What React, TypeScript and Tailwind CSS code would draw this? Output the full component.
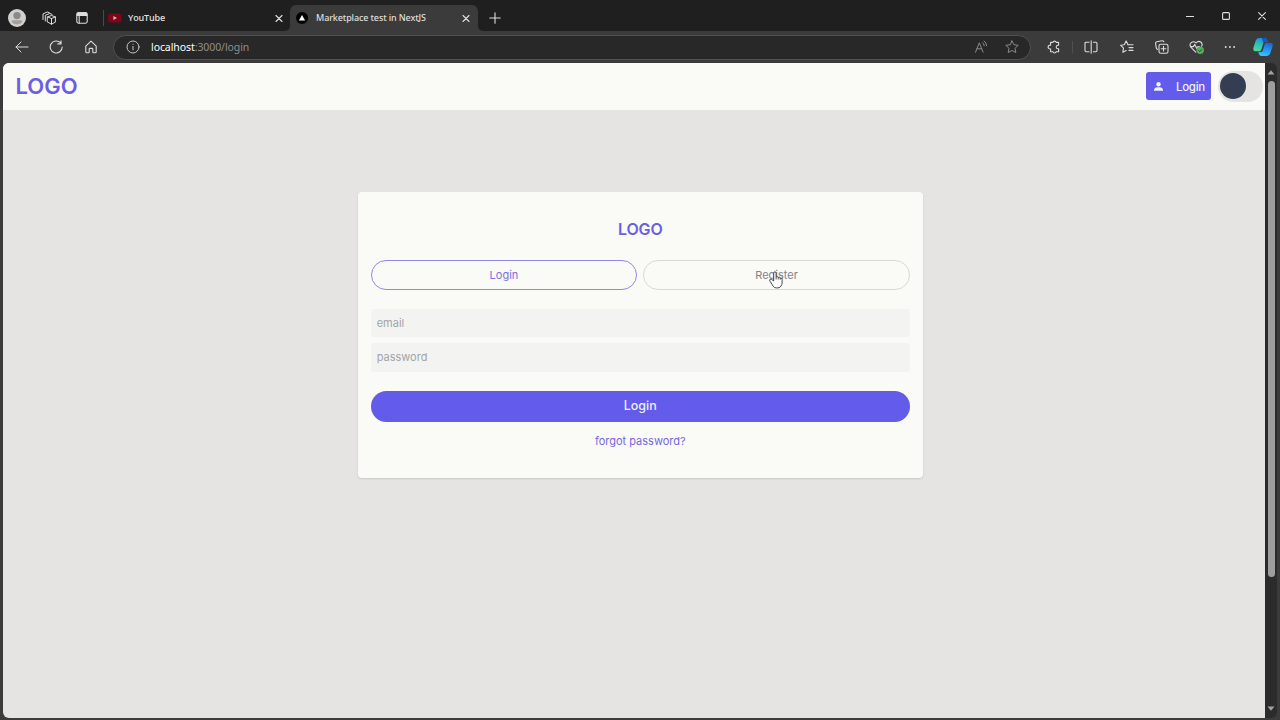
import type { ReactNode } from "react";

type IconProps = { className?: string; w?: number; h?: number; sw?: number; children: ReactNode };

function Icon({ className = "", w = 14, h = 14, sw = 1, children }: IconProps) {
  return (
    <svg
      className={`shrink-0 ${className}`}
      width={w}
      height={h}
      viewBox={`0 0 ${w} ${h}`}
      fill="none"
      stroke="currentColor"
      strokeWidth={sw}
      strokeLinecap="round"
      strokeLinejoin="round"
    >
      {children}
    </svg>
  );
}

function Slot({ className, children }: { className: string; children: ReactNode }) {
  return <div className={`flex h-full shrink-0 items-center justify-center ${className}`}>{children}</div>;
}

function CloseIcon({ className = "" }: { className?: string }) {
  return (
    <Icon w={8} h={8} sw={1.1} className={className}>
      <path d="M1 1.500l6 6M7 1.500L1 7.500" />
    </Icon>
  );
}

function TabStrip() {
  return (
    <div className="flex h-[31px] shrink-0 items-start bg-[#1f1f1f] text-[#dedede]">
      <Slot className="w-[34px] pt-[5px]">
        <svg width="18" height="18" viewBox="0 0 18 18" className="shrink-0">
          <circle cx="9" cy="9" r="9" fill="#d2d0ce" />
          <circle cx="9" cy="6.6" r="3.7" fill="#8c8987" />
          <path d="M3.8 12.1q0-.9.9-.9h8.6q.9 0 .9.900c0 2.200-2.400 3.300-5.200 3.300s-5.200-1.100-5.200-3.300z" fill="#a3a09e" />
        </svg>
      </Slot>
      <Slot className="w-[30px] pt-[5px]">
        <Icon w={14} h={14} sw={1}>
          <path d="M5.600 5.900l3.900-1.400 3.900 1.400v5.200l-3.900 2.100-3.900-2.100zM5.600 5.900l3.900 1.600 3.900-1.600M9.500 7.500v5.700" />
          <path d="M3.300 10V4.300L7.700 2.500l2.300.8M1 8.600V2.900L5.200 1l2.300.8" />
        </Icon>
      </Slot>
      <Slot className="w-[36px] pt-[5px]">
        <Icon w={12} h={12} sw={1.1}>
          <rect x="0.8" y="0.8" width="10.4" height="10.4" rx="1.6" />
          <path d="M1.2 1.6q.2-.8 1.200-.8h7.200q1 0 1.200.8v1.800H1.200z" fill="currentColor" />
          <path d="M3.200 4v7" />
        </Icon>
      </Slot>
      <div className="mt-[10px] ml-[3px] h-4 w-px bg-[#4a4a4a]" />
      <div className="flex h-full w-[186px] items-center pt-[5px] pl-1">
        <svg width="14" height="10" viewBox="0 0 14 10" className="shrink-0">
          <rect x="0" y="0.5" width="13.4" height="9" rx="2.5" fill="#7d0718" />
          <path d="M5.400 3l3.600 2-3.600 2z" fill="#d9b4b8" />
        </svg>
        <span className="ml-[6px] font-['Open_Sans','Noto_Sans',sans-serif] text-[9px] leading-3 font-semibold tracking-[-0.15px]">YouTube</span>
        <CloseIcon className="mr-[7.500px] ml-auto" />
      </div>
      <div className="relative mt-[5px] flex h-[26px] w-[188px] items-center rounded-t-[6px] bg-[#3b3b3b] pl-[6px]">
        <svg className="absolute bottom-0 -left-[5px]" width="5" height="5" viewBox="0 0 5 5">
          <path d="M5 0v5H0A5 5 0 0 0 5 0z" fill="#3b3b3b" />
        </svg>
        <svg className="absolute -right-[5px] bottom-0" width="5" height="5" viewBox="0 0 5 5">
          <path d="M0 0v5h5A5 5 0 0 1 0 0z" fill="#3b3b3b" />
        </svg>
        <svg width="12" height="12" viewBox="0 0 12 12" className="shrink-0">
          <circle cx="6" cy="6" r="6" fill="#000" />
          <path d="M6 3l3.100 5.400H2.900z" fill="#fff" />
        </svg>
        <span className="ml-[8px] font-['Noto_Sans','Open_Sans',sans-serif] text-[9px] leading-3 font-medium tracking-[-0.12px] whitespace-nowrap">
          Marketplace test in NextJS
        </span>
        <CloseIcon className="mr-[8px] ml-auto" />
      </div>
      <Slot className="w-[34px] pt-[5px]">
        <Icon w={12} h={12} sw={1.1}>
          <path d="M6 .8v10.400M.8 6h10.400" />
        </Icon>
      </Slot>
      <div className="ml-auto flex h-full pt-px">
        <Slot className="w-9">
          <Icon w={8} h={8} sw={1.1}>
            <path d="M.4 4.500h7.200" />
          </Icon>
        </Slot>
        <Slot className="w-9">
          <Icon w={8} h={8} sw={1.1}>
            <rect x="0.6" y="0.6" width="6.8" height="6.8" rx="1" />
          </Icon>
        </Slot>
        <Slot className="w-9">
          <Icon w={8} h={8} sw={1.1}>
            <path d="M.6.6l6.800 6.800M7.400.6L.6 7.400" />
          </Icon>
        </Slot>
      </div>
    </div>
  );
}

function Toolbar() {
  return (
    <div className="flex h-8 shrink-0 items-center bg-[#3b3b3b] text-[#dcdcdc]">
      <Slot className="ml-[5px] w-[34px]">
        <Icon w={14} h={12}>
          <path d="M13 6H1M6 1L1 6l5 5" />
        </Icon>
      </Slot>
      <Slot className="w-[34px]">
        <Icon sw={1.1}>
          <path d="M11.600 2.900A6 6 0 1 0 13.200 7M12 .7v3.200H8.800" />
        </Icon>
      </Slot>
      <Slot className="w-9">
        <Icon w={12} h={14} sw={1.1}>
          <path d="M.8 6.200L6 1.200l5.200 5v5.600q0 1-1 1H8.400q-.6 0-.6-.6V9q0-.6-.6-.6H4.800q-.6 0-.6.6v3.200q0 .6-.6.6H1.800q-1 0-1-1z" />
        </Icon>
      </Slot>
      <div className="ml-[4px] flex h-[25px] w-[918px] shrink-0 items-center rounded-full border border-[#505050] bg-[#282828] pl-[12px]">
        <Icon className="text-[#c4c4c4]">
          <circle cx="7" cy="7" r="6" />
          <path d="M7 6.400v3.400M7 4.200v.1" />
        </Icon>
        <span className="ml-[11px] font-['Noto_Sans','Open_Sans',sans-serif] text-[10.5px] leading-4 tracking-[-0.08px] text-[#8e8e8e]">
          <span className="text-white">localhost</span>:3000/login
        </span>
        <Icon w={14} h={14} className="ml-auto text-[#8a8a8a]">
          <path d="M1.500 12.200L5.300 2.800l3.800 9.400M2.900 8.800h4.800M8.700 2.800q1.400 1 1.500 3M10.100 1q2.400 1.600 2.600 4.800" />
        </Icon>
        <Icon w={14} h={14} className="mr-[11px] ml-[17px] text-[#8a8a8a]">
          <path d="M7 .9l1.900 3.800 4.200.6-3 3 .7 4.200L7 10.500l-3.800 2 .7-4.200-3-3 4.200-.6z" />
        </Icon>
      </div>
      <Slot className="ml-[5px] w-9">
        <Icon w={14} h={14} sw={1.1}>
          <path d="M3.600 2.400h2.300a1.700 1.700 0 0 1 3.300 0h2.400v2.800h-.6a1.800 1.800 0 0 0 0 3.600h.6v2.900H9.200a1.700 1.700 0 0 1-3.300 0H3.600V8.900a1.900 1.900 0 1 1 0-3.600z" />
        </Icon>
      </Slot>
      <div className="h-3 w-px bg-[#505050]" />
      <Slot className="w-9">
        <Icon w={14} h={14} sw={1.1}>
          <path d="M5 2.200H2.200q-1.200 0-1.200 1.200v7.200q0 1.200 1.200 1.200H5M9.400 2.200h2.400q1.200 0 1.200 1.200v7.200q0 1.200-1.200 1.200H9.400M7.200 .8v12.400" />
        </Icon>
      </Slot>
      <Slot className="w-[35px]">
        <Icon w={14} h={14} sw={1.1}>
          <path d="M7.600 4.800H13M9 7.600h4M9 10.400h4M8.200 4.800L6.100.9 4.300 4.700.7 5.300l2.800 2.800-.7 4.200 3.400-1.800" />
        </Icon>
      </Slot>
      <Slot className="w-[35px]">
        <Icon w={14} h={14} sw={1.1}>
          <rect x="4" y="4.200" width="9" height="9" rx="1.8" />
          <path d="M8.500 6.400v4.600M6.200 8.700h4.600M2.500 9.400q-1-.3-1.200-1.300L.6 3.400q-.2-1.400 1.100-1.700l5.400-1q1.300-.1 1.800 1.100" />
        </Icon>
      </Slot>
      <Slot className="w-[34px]">
        <Icon w={15} h={14} sw={1.1}>
          <path d="M6.800 12.200L2 7.400C-.8 4.200 3.800-.6 7 3c3.200-3.600 7.400 0 5.600 3.200M2 6.600h2.400l1.400-2.200 2 4 1.200-1.800h1.400" />
          <circle cx="11.200" cy="10.300" r="3.700" fill="#4fb357" stroke="none" />
          <path d="M9.700 10.400l1.100 1.100 2-2" stroke="#1f3d22" strokeWidth="0.900" />
        </Icon>
      </Slot>
      <Slot className="w-[34px]">
        <Icon w={12} h={4}>
          <path d="M1.700 2h.01M5.900 2h.01M10.100 2h.01" strokeWidth="1.900" />
        </Icon>
      </Slot>
      <Slot className="w-[31px]">
        <svg width="20" height="18" viewBox="0 0 20 18" className="shrink-0">
          <defs>
            <linearGradient id="copilotLeft" x1="0.6" y1="0" x2="0.3" y2="1">
              <stop offset="0" stopColor="#1b8fd8" />
              <stop offset="0.55" stopColor="#30c5b4" />
              <stop offset="1" stopColor="#55d895" />
            </linearGradient>
            <linearGradient id="copilotRight" x1="0.6" y1="0" x2="0.4" y2="1">
              <stop offset="0" stopColor="#1f63d6" />
              <stop offset="0.6" stopColor="#2a9df4" />
              <stop offset="1" stopColor="#35c8f5" />
            </linearGradient>
          </defs>
          <path d="M6 0h5.600q1.900 0 2.500 1.900l.5 2H12q-1.300 0-1.700 1.300L8.300 11.800Q7.800 13.200 6.300 13.200H3Q-.4 13.200.5 9.500L2.700 2.700Q3.500 0 6 0z" fill="url(#copilotLeft)" />
          <path d="M14 18H8.400q-1.900 0-2.500-1.900l-.5-2H8q1.300 0 1.700-1.300l2-6.600q.5-1.400 2-1.400H17q3.400 0 2.500 3.700l-2.200 6.800Q16.500 18 14 18z" fill="url(#copilotRight)" />
          <path d="M8.800 0h2.800q1.900 0 2.500 1.900l.5 2H12q-1.300 0-1.700 1.300z" fill="#1559c4" />
        </svg>
      </Slot>
    </div>
  );
}

function SiteHeader() {
  return (
    <header className="flex h-[47px] shrink-0 items-center justify-between bg-[#fafaf7] pl-[12.500px]">
      <span className="-mt-px text-[22px] leading-7 font-semibold text-[#6a5fdf]">LOGO</span>
      <div className="-mt-px flex items-center gap-[7px] pr-[2px]">
        <button className="flex h-7 w-[65px] items-center rounded-[3px] bg-[#635be9] pl-[7.500px] text-[#f1f0fb]">
          <svg width="9" height="9" viewBox="0 0 9 9" fill="currentColor">
            <circle cx="4.5" cy="2.300" r="2.200" />
            <path d="M0 8.700V7.800Q.2 5.400 3 5.200h3Q8.800 5.400 9 7.800v.9z" />
          </svg>
          <span className="ml-[13.500px] pt-px text-[11.500px] leading-4 font-medium tracking-[-0.3px]">Login</span>
        </button>
        <div className="flex h-[31px] w-[45px] items-center rounded-full bg-[#e5e4e2] pl-[2px]">
          <div className="h-[25.500px] w-[25.500px] rounded-full bg-[#333e52]" />
        </div>
      </div>
    </header>
  );
}

function LoginCard() {
  return (
    <section className="relative mt-[81.500px] ml-[355px] flex h-[286.500px] w-[564.500px] flex-col rounded-[4px] bg-[#fafaf7] px-[12.700px] shadow-[0_1px_2px_rgba(0,0,0,0.12)]">
      <h1 className="mt-[25px] text-center text-[16px] leading-6 font-semibold tracking-[-0.150px] text-[#6a5fdf]">LOGO</h1>
      <div className="mt-[19.500px] flex gap-[6px] text-[11px]">
        <button className="h-[30px] flex-1 rounded-full border border-[#9288e6] text-[#7c70dd]">Login</button>
        <button className="h-[30px] flex-1 rounded-full border border-[#d8d8d4] text-[#83818c]">Register</button>
      </div>
      <div className="mt-[18.500px] flex h-[28px] items-center rounded-[3px] bg-[#f3f4f1] pt-[2px] pl-[6px] text-[11px] text-[#a3a3a8]">email</div>
      <div className="mt-[6px] flex h-[29px] items-center rounded-[3px] bg-[#f3f4f1] pt-px pl-[6px] text-[11px] text-[#a3a3a8]">password</div>
      <button className="mt-[19px] h-[31px] shrink-0 rounded-full bg-[#635be9] pt-px text-[12.500px] font-medium text-[#efeefc]">Login</button>
      <a className="mt-[11.500px] text-center text-[11px] leading-4 text-[#7469df]">forgot password?</a>
      <svg className="absolute top-[78px] left-[410px]" width="16" height="20" viewBox="0 0 16 20">
        <path
          d="M5.700 11V3.200q0-1.400 1.200-1.400T8.100 3.200v3.600q1.600-.6 2.100.5 1.500-.5 2 .6 1.900-.2 1.900 1.300v3.600q0 1.800-1.100 3.200-.8 1.900-3.100 1.900H8.200q-2.100 0-3-1.700L2 11.200q-.8-1.300.3-1.900 1-.5 1.900.5z"
          fill="#fff"
          stroke="#33333a"
          strokeWidth="0.9"
          strokeLinejoin="round"
        />
        <path d="M8.100 6.800v2.700M10.200 7.300v2.200M12.200 8v1.700" stroke="#33333a" strokeWidth="0.800" />
      </svg>
    </section>
  );
}

function Scrollbar() {
  return (
    <div className="flex h-full w-[12px] shrink-0 flex-col items-center rounded-r-[6px] bg-[#2b2b2b] pt-[7px] pb-[7px]">
      <svg width="8" height="5" viewBox="0 0 8 5" className="shrink-0">
        <path d="M4 .3L7.500 4.500H.5z" fill="#a2a2a2" />
      </svg>
      <div className="mt-[6px] h-[496px] w-[7px] shrink-0 rounded-full bg-[#9e9e9e]" />
      <svg width="8" height="5" viewBox="0 0 8 5" className="mt-auto shrink-0">
        <path d="M4 4.700L7.500.5H.5z" fill="#a2a2a2" />
      </svg>
    </div>
  );
}

export default function App() {
  return (
    <div className="flex h-[720px] w-[1280px] flex-col overflow-hidden bg-[#3b3b3b]">
      <TabStrip />
      <Toolbar />
      <div className="flex h-[655px] pl-[3px]">
        <main className="flex w-[1262px] shrink-0 flex-col overflow-hidden rounded-l-[6px] bg-[#e5e4e2] font-['Inter',sans-serif]">
          <SiteHeader />
          <LoginCard />
        </main>
        <Scrollbar />
      </div>
    </div>
  );
}
